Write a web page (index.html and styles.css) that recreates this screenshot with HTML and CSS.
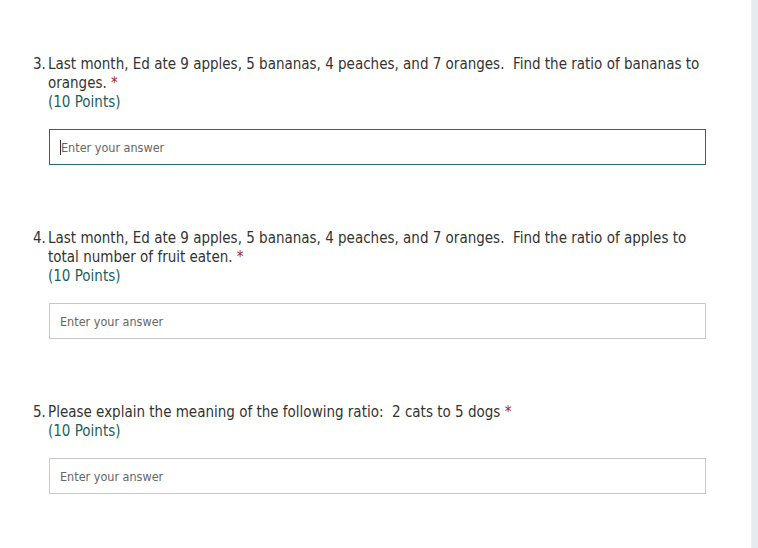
FILE: index.html
```html
<!DOCTYPE html>
<html>
<head>
<meta charset="utf-8">
<link rel="stylesheet" href="styles.css">
</head>
<body>
<div class="page">
  <main class="form">
    <section class="question">
      <div class="title">
        <span class="num">3.</span>
        <div class="text">
          <div>Last month, Ed ate 9 apples, 5 bananas, 4 peaches, and 7 oranges.&nbsp; Find the ratio of bananas to oranges. <span class="req">*</span></div>
          <div class="points">(10 Points)</div>
        </div>
      </div>
      <div class="answer focused"><span class="caret"></span>Enter your answer</div>
    </section>
    <section class="question">
      <div class="title">
        <span class="num">4.</span>
        <div class="text">
          <div>Last month, Ed ate 9 apples, 5 bananas, 4 peaches, and 7 oranges.&nbsp; Find the ratio of apples to total number of fruit eaten. <span class="req">*</span></div>
          <div class="points">(10 Points)</div>
        </div>
      </div>
      <div class="answer">Enter your answer</div>
    </section>
    <section class="question">
      <div class="title">
        <span class="num">5.</span>
        <div class="text">
          <div>Please explain the meaning of the following ratio:&nbsp; 2 cats to 5 dogs <span class="req">*</span></div>
          <div class="points">(10 Points)</div>
        </div>
      </div>
      <div class="answer">Enter your answer</div>
    </section>
  </main>
  <div class="strip"></div>
</div>
</body>
</html>
```
FILE: styles.css
```css
html, body {
  margin: 0;
  padding: 0;
  background: #ffffff;
}
body {
  font-family: Tahoma, "DejaVu Sans Condensed", "DejaVu Sans", sans-serif;
  color: #333333;
}
.page {
  display: flex;
  width: 758px;
  height: 548px;
  overflow: hidden;
}
.form {
  width: 751px;
  flex: none;
  padding-top: 55px;
  box-sizing: border-box;
  display: flex;
  flex-direction: column;
  gap: 64px;
}
.strip {
  flex: 1;
  background: #e6ebef;
  border-left: 1px solid #eef1f4;
}
.question {
  padding-left: 33px;
  width: 706px;
  box-sizing: border-box;
}
.title {
  display: flex;
  font-size: 15px;
  line-height: 19px;
}
.num {
  width: 15px;
  flex: none;
}
.text {
  width: 660px;
}
.req {
  color: #a4262c;
}
.points {
  color: #1b5f60;
}
.answer {
  margin-top: 17px;
  margin-left: 16px;
  height: 36px;
  box-sizing: border-box;
  border: 1px solid #c8c8c8;
  padding-left: 10px;
  display: flex;
  align-items: center;
  font-size: 12.5px;
  color: #666666;
}
.answer.focused {
  border-color: #1f6f6f;
}
.caret {
  width: 1px;
  height: 15px;
  background: #333333;
}
```
